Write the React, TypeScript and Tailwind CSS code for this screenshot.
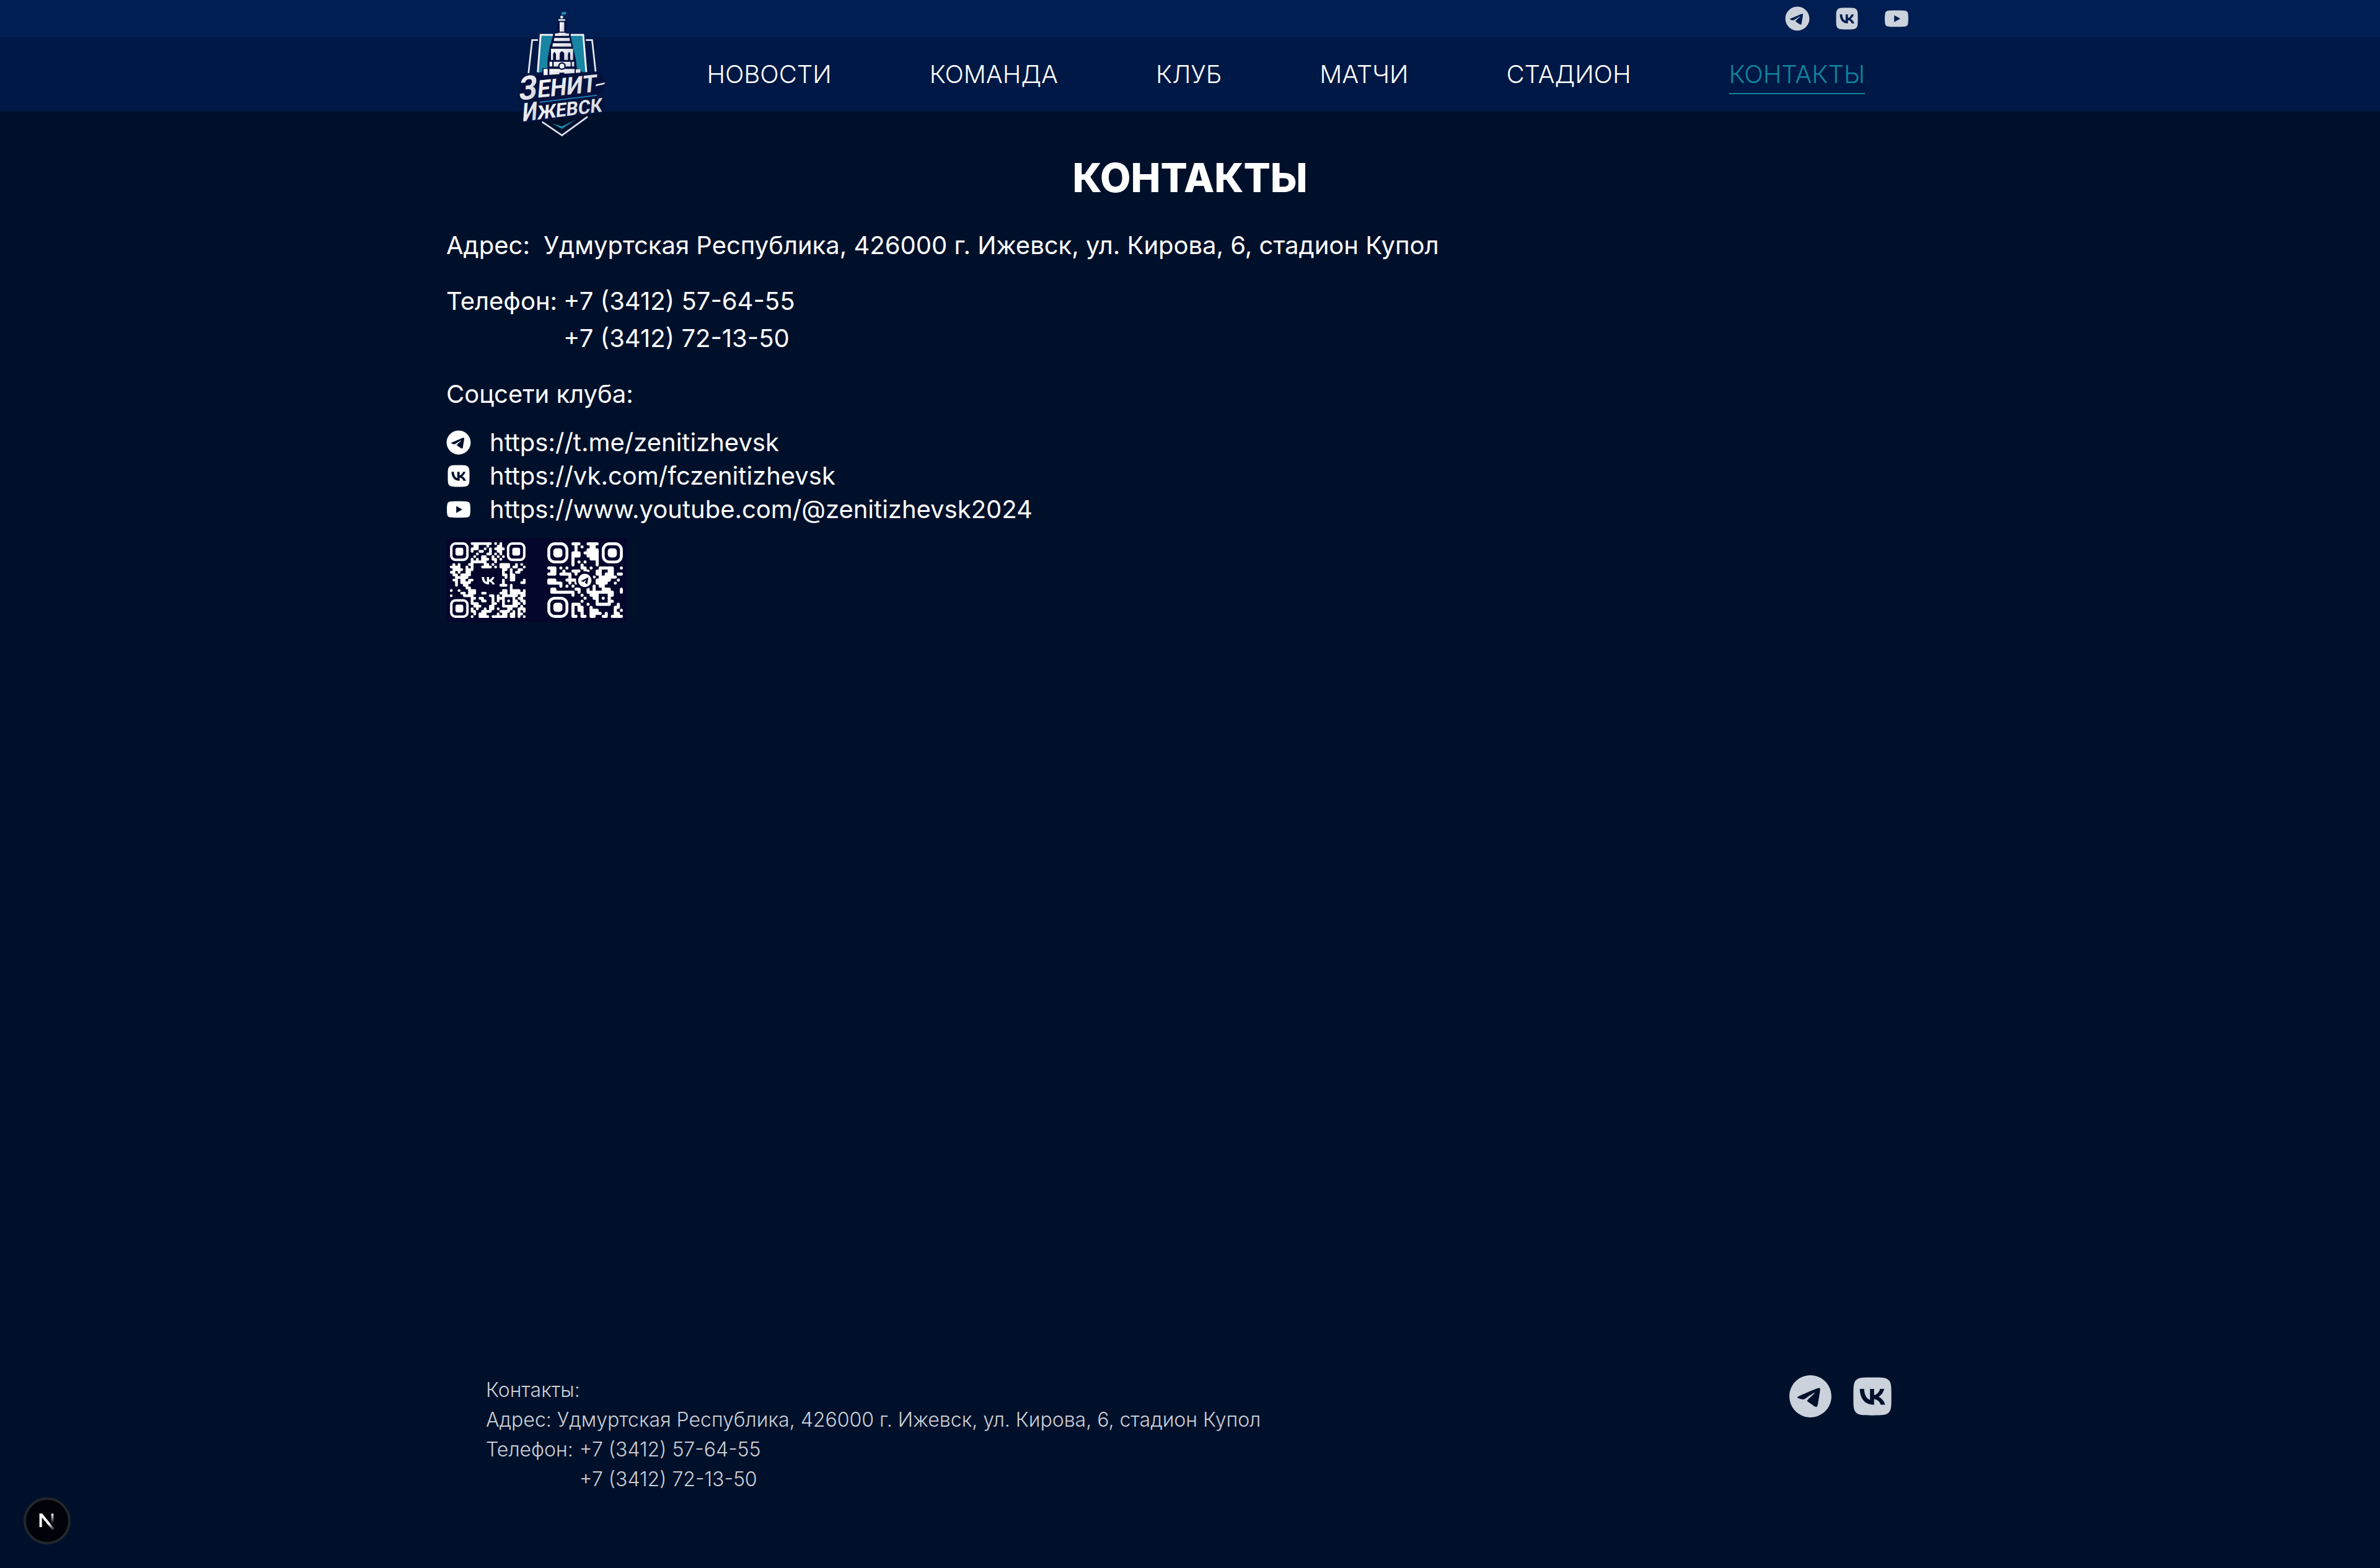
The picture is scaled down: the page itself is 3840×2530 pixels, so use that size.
import React from 'react';
import { FaTelegram, FaVk, FaYoutube } from 'react-icons/fa6';

const NAV = ['НОВОСТИ', 'КОМАНДА', 'КЛУБ', 'МАТЧИ', 'СТАДИОН', 'КОНТАКТЫ'];

function ClubLogo() {
  return (
    <svg viewBox="0 0 660 720" className="h-[240px] w-[220px]" fill="none">
      <defs>
        <linearGradient id="silver" x1="0" y1="0" x2="1" y2="1">
          <stop offset="0" stopColor="#ffffff" />
          <stop offset="1" stopColor="#c9cdd6" />
        </linearGradient>
      </defs>
      <path d="M224 590 L320 655 L444 565" stroke="#dfe2f2" strokeWidth="8" />
      <path d="M272 598 L320 624 L386 580 L320 612 Z" fill="#1c8aa8" />
      <path d="M204 194 H176 L158 354" stroke="#e6e9f2" strokeWidth="8" />
      <path d="M436 194 H466 L483 348" stroke="#e6e9f2" strokeWidth="8" />
      <path d="M215 170 H424 L440 350 H204 Z" fill="#1785a3" />
      <path d="M277 169 H217 L203 350 M362 169 H423 L438 350" stroke="#eceff5" strokeWidth="9" />
      <path d="M280 160 H360 L374 230 L388 290 L392 330 L420 350 V380 H225 V330 H250 V290 L260 230 Z" fill="#06103f" />
      <path d="M298 92 H342 V160 H298 Z" fill="#06103f" />
      <path d="M319 59 L342 58 L338 70 L319 72 Z" fill="#2191b5" />
      <circle cx="319" cy="83" r="7" fill="#eef0f5" />
      <g fill="url(#silver)">
        <path d="M303 93 H336 V101 H303 Z" />
        <path d="M309 107 H331 V153 H309 Z" />
        <path d="M286 162 Q304 162 306 158 H334 Q336 162 354 162 V174 H286 Z" />
        <path d="M283 184 H357 L359 199 H281 Z" />
        <path d="M276 209 H363 L366 226 H274 Z" />
        <path d="M267 236 H374 V290 H360 V262 Q356 240 349 262 V290 H331 V258 Q320 238 309 258 V290 H291 V262 Q284 240 277 262 V290 H267 Z" />
        <path d="M260 299 H273 V322 H260 Z M280 299 H362 V322 H280 Z M368 299 H379 V322 H368 Z" />
        <path d="M231 334 H251 V374 H231 Z M259 334 H381 V362 H332 V352 H308 V372 H259 Z M387 335 H409 V354 H387 Z" />
      </g>
      <circle cx="320" cy="320" r="15" fill="#f2f3f7" stroke="#06103f" strokeWidth="7" />
      <path d="M125 372 L500 345 L535 400 L500 470 L526 480 L515 545 L122 598 L150 492 L108 478 Z" fill="#04113d" />
      <path d="M212 495 L490 461" stroke="#1c7ab0" strokeWidth="6" />
      <g fill="url(#silver)" fontFamily="Roboto, sans-serif" fontWeight="700">
        <g transform="translate(109 486) rotate(-6) skewX(-11)">
          <text x="0" y="0" fontSize="160" textLength="88" lengthAdjust="spacingAndGlyphs">З</text>
          <text x="90" y="-3" fontSize="116" textLength="288" lengthAdjust="spacingAndGlyphs">ЕНИТ</text>
        </g>
        <path d="M486 408 L530 399 L524 408 L482 418 Z" />
        <g transform="translate(127 588) rotate(-7) skewX(-11)">
          <text x="0" y="0" fontSize="122" textLength="72" lengthAdjust="spacingAndGlyphs">И</text>
          <text x="73" y="0" fontSize="92" textLength="316" lengthAdjust="spacingAndGlyphs">ЖЕВСК</text>
        </g>
      </g>
    </svg>
  );
}

const VK_QR = [
  '........########.#.#.........',
  '.........##...#...##.........',
  '........###..#.#.####........',
  '........#..##..#..##.........',
  '..........#...##.#.#.........',
  '.........#..##..#.#.#........',
  '........#.#.###.##.#.........',
  '........######...#...........',
  '.#.#...##....##.#..####..#.#.',
  '####..#.#...####.#.####.##..#',
  '.####.###...........##.#..##.',
  '##.#..##............#..#.##..',
  '.##.####............##.##....',
  '..#####..............#.##....',
  '.##.##.##...........#..##...#',
  '..#.####............#......##',
  '..#..##............###.#.....',
  '......##...............#.....',
  '#..#...###..........##.####.#',
  '....##.###..##.....###.######',
  '#....####......##.#.######.##',
  '........##.##...#.###...#.##.',
  '........#...##..#.#.#.#.##.##',
  '........###.....##..#...###.#',
  '.........###...##...######.#.',
  '........#.#..#.##.#...##..###',
  '........##..####...####.#.#.#',
  '.........#.###....#.##.##.##.',
  '........#..####.######.##.#.#',
];

const TG_QR = [
  '........###..####........',
  '.........#.#..##.........',
  '.........#...####........',
  '........###.#####........',
  '........###..####........',
  '........#.....###........',
  '........#.#.#...#........',
  '........#..#....#........',
  '###.#.#....##.#..#####..#',
  '.##..#..###.##..##..##...',
  '###.####.#......##.###.##',
  '.......#.......#.######..',
  '###...####......#####..#.',
  '#####..#.#......####..#..',
  '....#.#.#......#.##......',
  '.##......##..#.#..###...#',
  '.########.#..#########..#',
  '........#..#..###...##...',
  '............#..##.#.#....',
  '...........#....#...##...',
  '........###..#..#####..#.',
  '........#.##..#.......##.',
  '........#.##..###.....#.#',
  '........#..#..####.#..##.',
  '........##.##.##..##.####',
];

function QrModules({ rows, radius }: { rows: string[]; radius: number }) {
  const on = (x: number, y: number) => rows[y]?.[x] === '#';
  const shapes: React.ReactNode[] = [];
  rows.forEach((row, y) => {
    for (let x = 0; x < row.length; x++) {
      if (!on(x, y)) continue;
      const key = `${x}-${y}`;
      shapes.push(<rect key={key} x={x} y={y} width="1" height="1" rx={radius} />);
      if (on(x + 1, y)) shapes.push(<rect key={`${key}h`} x={x + 0.5} y={y} width="1" height="1" />);
      if (on(x, y + 1)) shapes.push(<rect key={`${key}v`} x={x} y={y + 0.5} width="1" height="1" />);
    }
  });
  return <g>{shapes}</g>;
}

function Finder({ x, y, size, radius }: { x: number; y: number; size: number; radius: number }) {
  return (
    <g>
      <rect
        x={x + 0.5}
        y={y + 0.5}
        width={size - 1}
        height={size - 1}
        rx={radius}
        fill="none"
        stroke="#fff"
        strokeWidth="0.95"
      />
      <rect x={x + size / 2 - 1.5} y={y + size / 2 - 1.5} width="3" height="3" rx={radius / 2} />
    </g>
  );
}

function QrCode({ kind }: { kind: 'vk' | 'telegram' }) {
  const rows = kind === 'vk' ? VK_QR : TG_QR;
  const n = rows.length;
  const size = kind === 'vk' ? 7.2 : 7;
  const radius = kind === 'vk' ? 1.6 : 2;
  return (
    <svg viewBox={`0 0 ${n} ${n}`} className="size-[122px]" fill="#fff">
      <QrModules rows={rows} radius={kind === 'vk' ? 0.35 : 0.45} />
      <Finder x={0} y={0} size={size} radius={radius} />
      <Finder x={n - size} y={0} size={size} radius={radius} />
      <Finder x={0} y={n - size} size={size} radius={radius} />
      {kind === 'vk' ? (
        <path
          transform="translate(12.2 13.3) scale(.049)"
          d="M54 58 C20 58 1 35 0 0 h18 c1 26 13 37 22 39 V0 h17 v22 c10-1 21-11 25-22 h17 c-3 15-14 26-23 31 c9 4 21 13 26 27 H83 c-4-12-14-20-26-21 v21 Z"
        />
      ) : (
        <g>
          <circle cx="12.4" cy="12.5" r="2.9" fill="#04062c" />
          <circle cx="12.4" cy="12.6" r="2.2" />
          <path d="M11.1 12.8 L13.6 11.6 L13.2 13.9 L12.4 13.3 L12.9 12.4 L11.9 13.1 Z" fill="#04062c" />
        </g>
      )}
    </svg>
  );
}

function DevBadge() {
  return (
    <div className="fixed bottom-[38px] left-[38px] flex size-[76px] items-center justify-center rounded-full border-4 border-[#23262b] bg-[#01030a]">
      <svg viewBox="0 0 76 82" className="ml-[-1px] mt-[3px] h-[27px] w-[25px]" fill="none">
        <defs>
          <linearGradient id="stem" x1="0" y1="0" x2="0" y2="1">
            <stop offset="0" stopColor="#fff" />
            <stop offset="1" stopColor="#fff" stopOpacity="0" />
          </linearGradient>
          <linearGradient id="diag" gradientUnits="userSpaceOnUse" x1="46" y1="50" x2="74" y2="84">
            <stop offset="0" stopColor="#fff" />
            <stop offset="1" stopColor="#fff" stopOpacity="0" />
          </linearGradient>
        </defs>
        <rect x="60" y="1" width="11" height="48" fill="url(#stem)" />
        <rect x="2" y="1" width="12" height="66" fill="#fff" />
        <path d="M2 1 H16 L76 76 L67 83 L2 5 Z" fill="url(#diag)" />
      </svg>
    </div>
  );
}

export default function App() {
  return (
    <div className="flex min-h-screen flex-col bg-[#00102b] font-['Inter',sans-serif] text-[40px] leading-[60px] text-white">
      <header>
        <div className="h-[60px] bg-[#001e51]">
          <div className="mx-auto flex h-full w-[2400px] items-center justify-end gap-10 px-10 text-[#ccd2dc]">
            <FaTelegram size={40} />
            <FaVk size={40} />
            <FaYoutube size={40} />
          </div>
        </div>
        <div className="h-[120px] bg-[#001845]">
          <div className="mx-auto flex h-full w-[2400px] items-start">
            <a className="relative -mt-[60px] ml-20 block h-[240px] w-[220px] shrink-0">
              <ClubLogo />
            </a>
            <nav className="ml-auto mr-[111px] mt-[30px] flex gap-[158px] font-light">
              {NAV.map((item) => (
                <a
                  key={item}
                  className={
                    item === 'КОНТАКТЫ'
                      ? 'border-b-2 border-[#0e869f] text-[#0e869f]'
                      : 'border-b-2 border-transparent'
                  }
                >
                  {item}
                </a>
              ))}
            </nav>
          </div>
        </div>
      </header>

      <main className="mx-auto w-[2400px] grow">
        <h1 className="mt-[59px] text-center text-[64px] font-extrabold leading-[96px]">КОНТАКТЫ</h1>
        <div className="mt-[31px] flex">
          <span>Адрес:</span>
          <span className="ml-[22px]">Удмуртская Республика, 426000 г. Ижевск, ул. Кирова, 6, стадион Купол</span>
        </div>
        <div className="mt-[30px] flex gap-[10px]">
          <span>Телефон:</span>
          <div className="flex flex-col">
            <span>+7 (3412) 57-64-55</span>
            <span>+7 (3412) 72-13-50</span>
          </div>
        </div>
        <p className="mt-[30px]">Соцсети клуба:</p>
        <ul className="mt-[21px] leading-[54px]">
          <li className="flex items-center gap-[30px]">
            <FaTelegram size={40} />
            <span>https://t.me/zenitizhevsk</span>
          </li>
          <li className="flex items-center gap-[30px]">
            <FaVk size={40} />
            <span>https://vk.com/fczenitizhevsk</span>
          </li>
          <li className="flex items-center gap-[30px]">
            <FaYoutube size={40} />
            <span>https://www.youtube.com/@zenitizhevsk2024</span>
          </li>
        </ul>
        <div className="mt-[19px] flex h-[136px] w-[292px] items-center justify-between bg-[#04062c] pl-[6px] pr-[7px]">
          <QrCode kind="vk" />
          <QrCode kind="telegram" />
        </div>
      </main>

      <footer className="mx-auto flex h-[312px] w-[2400px] items-start justify-between px-16 text-[32px] font-light leading-[48px] text-[#ccd0d6]">
        <div className="pt-px">
          <p>Контакты:</p>
          <p>Адрес: Удмуртская Республика, 426000 г. Ижевск, ул. Кирова, 6, стадион Купол</p>
          <div className="flex gap-[10px]">
            <span>Телефон:</span>
            <div className="flex flex-col">
              <span>+7 (3412) 57-64-55</span>
              <span>+7 (3412) 72-13-50</span>
            </div>
          </div>
        </div>
        <div className="flex gap-[30px] text-[#ccd2dc]">
          <FaTelegram size={70} />
          <FaVk size={70} />
        </div>
      </footer>
      <DevBadge />
    </div>
  );
}
